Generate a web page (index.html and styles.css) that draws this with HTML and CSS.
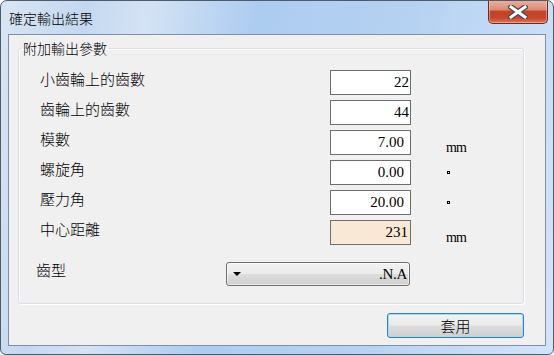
FILE: index.html
```html
<!DOCTYPE html>
<html lang="zh-Hant">
<head>
    <meta charset="UTF-8">
    <title>確定輸出結果</title>
    <link rel="stylesheet" href="styles.css">
</head>
<body>
    <div class="window">
        <div class="titlebar">
            <span class="title">確定輸出結果</span>
            <button class="close" title="關閉">
                <svg width="20" height="14" viewBox="0 0 20 14">
                    <path d="M3 2 L17 12 M17 2 L3 12" stroke="#4a4a4a" stroke-width="5.5" stroke-linecap="square"/>
                    <path d="M3 2 L17 12 M17 2 L3 12" stroke="#ffffff" stroke-width="3" stroke-linecap="square"/>
                </svg>
            </button>
        </div>
        <div class="frame">
            <div class="client">
                <fieldset class="group">
                    <legend>附加輸出參數</legend>
                    <!-- 參數列表 -->
                    <div class="params">
                        <label>小齒輪上的齒數</label>
                        <input class="num" type="text" value="22" readonly>
                        <span></span>

                        <label>齒輪上的齒數</label>
                        <input class="num" type="text" value="44" readonly>
                        <span></span>

                        <label>模數</label>
                        <input class="num dec" type="text" value="7.00" readonly>
                        <span class="unit">mm</span>

                        <label>螺旋角</label>
                        <input class="num dec" type="text" value="0.00" readonly>
                        <span class="deg"></span>

                        <label>壓力角</label>
                        <input class="num dec" type="text" value="20.00" readonly>
                        <span class="deg"></span>

                        <label>中心距離</label>
                        <input class="num result" type="text" value="231" readonly>
                        <span class="unit">mm</span>
                    </div>
                    <div class="select-row">
                        <span class="select-label">齒型</span>
                        <div class="combo">
                            <span class="arrow"></span>
                            <span class="combo-text">.N.A</span>
                        </div>
                    </div>
                </fieldset>
                <div class="actions">
                    <button class="apply">套用</button>
                </div>
            </div>
        </div>
    </div>
</body>
</html>
```

FILE: styles.css
```css
html, body {
    margin: 0;
    padding: 0;
    background: #ffffff;
}
body {
    font-family: "Noto Sans CJK TC", "Noto Sans CJK SC", sans-serif;
    font-weight: 300;
    color: #000;
}
.window {
    width: 554px;
    height: 355px;
    box-sizing: border-box;
    border: 1px solid #4d5b6b;
    border-radius: 7px 7px 6px 6px;
    overflow: hidden;
    background: linear-gradient(100deg, #d9e6f4 0%, #c3d8f0 14%, #d4e3f4 24%, #acccf0 42%, #b6d2f2 68%, #d2e4f8 100%);
    display: flex;
    flex-direction: column;
}
.titlebar {
    height: 33px;
    display: flex;
    justify-content: space-between;
    align-items: center;
    flex-shrink: 0;
}
.title {
    font-size: 14px;
    line-height: 18px;
    margin-left: 8px;
    margin-top: 1px;
}
.close {
    align-self: flex-start;
    width: 60px;
    height: 24px;
    margin-right: 5px;
    margin-top: -1px;
    padding: 0;
    border: 1px solid #6b2b1f;
    border-top: none;
    border-radius: 0 0 5px 5px;
    background: linear-gradient(#eab3a2 0%, #dc8a74 42%, #c34228 50%, #c7472c 78%, #de7656 100%);
    box-shadow: inset 0 0 0 1px rgba(255, 220, 210, 0.45);
    display: flex;
    align-items: center;
    justify-content: center;
}
.frame {
    flex: 1;
    padding: 0 7px 8px 7px;
    display: flex;
}
.client {
    flex: 1;
    border: 1px solid #7f90a3;
    background: #f0f0f0;
}
.group {
    margin: 4px 0 0 9px;
    width: 506px;
    box-sizing: border-box;
    border: 1px solid #d5dfe5;
    border-radius: 3px;
    box-shadow: inset 1px 1px 0 #ffffff, 1px 1px 0 #ffffff;
    padding: 13px 0 17px 2px;
}
.group legend {
    font-size: 14px;
    line-height: 18px;
    padding: 0 2px;
}
.params {
    margin-left: 19px;
    display: grid;
    grid-template-columns: 290px 81px auto;
    grid-auto-rows: 25px;
    row-gap: 5px;
}
.params label {
    font-size: 15px;
    line-height: 18px;
    align-self: start;
}
.num {
    box-sizing: border-box;
    width: 81px;
    height: 25px;
    border: 1px solid #6e6e6e;
    background: #ffffff;
    font-family: "Liberation Serif", serif;
    font-weight: normal;
    font-size: 15px;
    text-align: right;
    padding: 0 1px 0 0;
    margin: 0;
    outline: none;
}
.num.dec {
    padding-right: 6px;
}
.num.result {
    background: #f9e8d6;
    padding-right: 2px;
}
.unit {
    font-family: "Liberation Serif", serif;
    font-weight: normal;
    font-size: 14px;
    line-height: 15px;
    align-self: end;
    margin-left: 35px;
    letter-spacing: -1px;
}
.deg {
    width: 3px;
    height: 3px;
    border: 1px solid #000;
    box-sizing: border-box;
    align-self: center;
    margin-left: 36px;
}
.select-row {
    margin: 17px 0 0 15px;
    display: flex;
    align-items: center;
}
.select-label {
    font-size: 15px;
    line-height: 18px;
    width: 190px;
    margin-top: -9px;
}
.combo {
    box-sizing: border-box;
    width: 184px;
    height: 24px;
    border: 1px solid #707070;
    border-radius: 3px;
    background: linear-gradient(#f2f2f2 0%, #ebebeb 48%, #dddddd 52%, #cfcfcf 100%);
    box-shadow: inset 0 0 0 1px rgba(255, 255, 255, 0.6);
    display: flex;
    align-items: center;
    justify-content: space-between;
    padding: 0 2px 0 6px;
}
.arrow {
    width: 0;
    height: 0;
    border-left: 4px solid transparent;
    border-right: 4px solid transparent;
    border-top: 4px solid #000;
}
.combo-text {
    font-family: "Liberation Serif", serif;
    font-weight: normal;
    font-size: 15px;
    letter-spacing: -0.3px;
}
.actions {
    width: 515px;
    display: flex;
    justify-content: flex-end;
    margin-top: 9px;
}
.apply {
    width: 137px;
    height: 25px;
    box-sizing: border-box;
    border: 1px solid #3c7fb1;
    border-radius: 3px;
    background: linear-gradient(#f2f2f2 0%, #ebebeb 48%, #dddddd 52%, #cfcfcf 100%);
    box-shadow: inset 0 0 0 1px #9be0f7;
    font-family: "Noto Sans CJK TC", "Noto Sans CJK SC", sans-serif;
    font-weight: 300;
    font-size: 15px;
    line-height: 18px;
    padding: 0;
    color: #000;
}
```
